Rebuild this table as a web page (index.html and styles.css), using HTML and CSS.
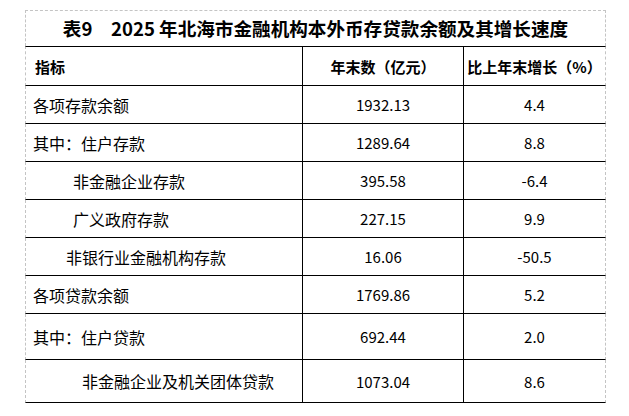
FILE: index.html
```html
<!DOCTYPE html>
<html lang="zh-CN">
<head>
<meta charset="utf-8">
<title>表9 2025年北海市金融机构本外币存贷款余额及其增长速度</title>
<link rel="stylesheet" href="styles.css">
</head>
<body>
<div class="sheet">
  <div class="title">表9　2025 年北海市金融机构本外币存贷款余额及其增长速度</div>
  <table class="data">
    <colgroup>
      <col class="c1"><col class="c2"><col class="c3">
    </colgroup>
    <thead>
      <tr class="head">
        <th class="name">指标</th>
        <th>年末数（亿元）</th>
        <th>比上年末增长（%）</th>
      </tr>
    </thead>
    <tbody>
      <tr><td class="name">各项存款余额</td><td class="num">1932.13</td><td class="num">4.4</td></tr>
      <tr><td class="name">其中：住户存款</td><td class="num">1289.64</td><td class="num">8.8</td></tr>
      <tr><td class="name ind1">非金融企业存款</td><td class="num">395.58</td><td class="num">-6.4</td></tr>
      <tr><td class="name ind1">广义政府存款</td><td class="num">227.15</td><td class="num">9.9</td></tr>
      <tr><td class="name ind2">非银行业金融机构存款</td><td class="num">16.06</td><td class="num">-50.5</td></tr>
      <tr><td class="name">各项贷款余额</td><td class="num">1769.86</td><td class="num">5.2</td></tr>
      <tr class="tall"><td class="name">其中：住户贷款</td><td class="num">692.44</td><td class="num">2.0</td></tr>
      <tr class="last"><td class="name ind3">非金融企业及机关团体贷款</td><td class="num">1073.04</td><td class="num">8.6</td></tr>
    </tbody>
  </table>
</div>
</body>
</html>
```
FILE: styles.css
```css
html, body {
  margin: 0;
  padding: 0;
  background: #ffffff;
}

body {
  font-family: "Noto Sans CJK SC", "Noto Sans", sans-serif;
  color: #000000;
}

.sheet {
  width: 581px;
  margin: 10px 0 0 25px;
}

.title {
  box-sizing: border-box;
  height: 36px;
  border-top: 1px dashed #c4c4c4;
  border-left: 1px dashed #c4c4c4;
  border-right: 1px dashed #c4c4c4;
  font-size: 18.6px;
  font-weight: 700;
  line-height: 34px;
  text-align: center;
  white-space: nowrap;
}

.data {
  width: 581px;
  border-collapse: separate;
  border-spacing: 0;
  table-layout: fixed;
}

.c1 { width: 277px; }
.c2 { width: 161px; }
.c3 { width: 143px; }

.data th,
.data td {
  box-sizing: border-box;
  height: 38px;
  padding: 0;
  border-bottom: 1px solid #000000;
  border-left: 1px solid #000000;
  text-align: center;
  vertical-align: middle;
  white-space: nowrap;
}

.data th {
  height: 40px;
  border-top: 1px solid #000000;
  font-size: 15px;
  font-weight: 700;
}

.data td {
  font-size: 16px;
  font-weight: 400;
}

.data th:first-child,
.data td:first-child {
  border-left: 1px dashed #c4c4c4;
}

.data th:last-child,
.data td:last-child {
  border-right: 1px dashed #c4c4c4;
}

.data .name {
  text-align: left;
  padding-left: 7px;
}

.data th.name {
  padding-left: 9px;
}

.data .ind1 { padding-left: 47px; }
.data .ind2 { padding-left: 40px; }
.data .ind3 { padding-left: 56px; }

.data td.num {
  font-size: 15px;
}

.data tr.tall td { height: 46px; }
.data tr.last td { height: 43px; }
```
